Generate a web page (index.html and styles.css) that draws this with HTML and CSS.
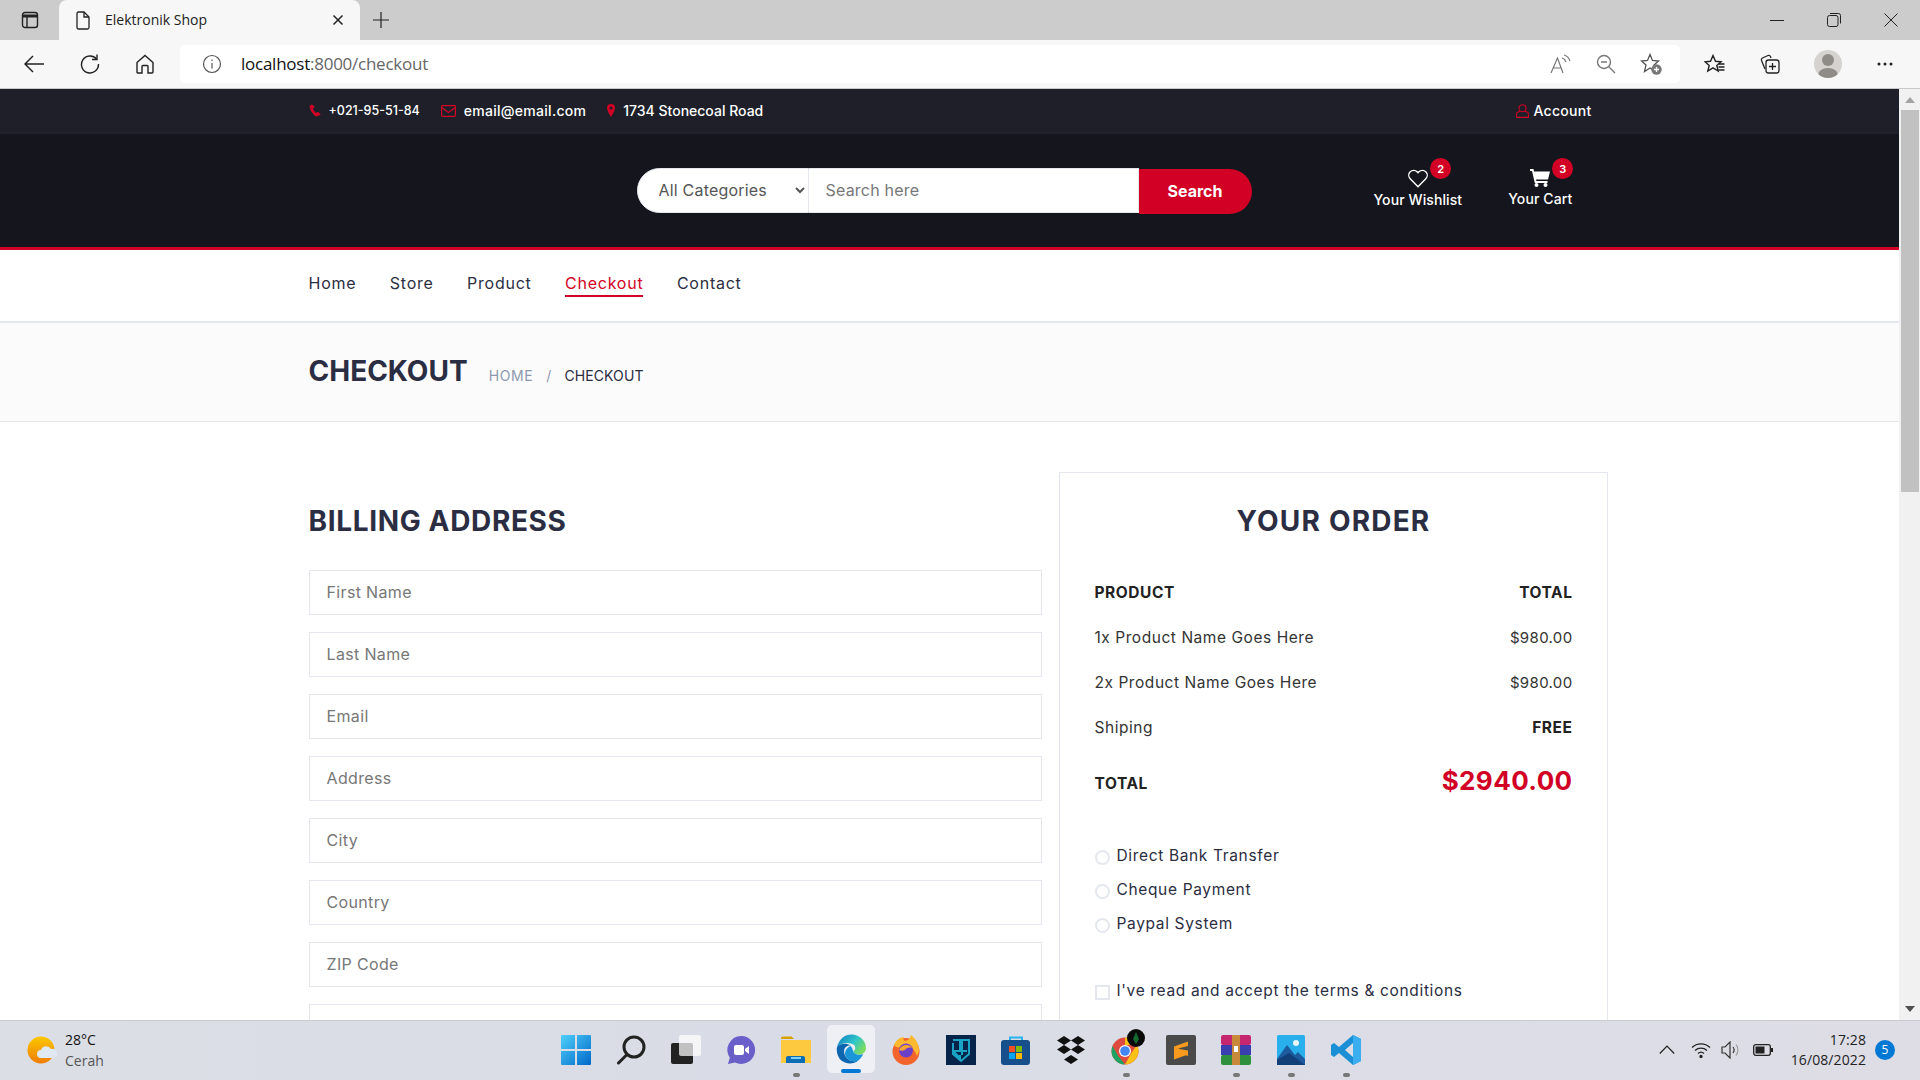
FILE: index.html
```html
<!DOCTYPE html>
<html lang="en">
  <head>
    <meta charset="UTF-8" />
    <title>Elektronik Shop</title>
    <link rel="stylesheet" href="styles.css">
  </head>
  <body>
    <!-- Browser tabs -->
    <div class="tabstrip">
      <svg class="tab-actions" width="18" height="18" viewBox="0 0 18 18" fill="none" stroke="#222" stroke-width="1.4"><rect x="1.5" y="1.5" width="15" height="15" rx="2.5"/><path d="M1.5 5h15" stroke-width="3"/><path d="M6 5v11"/></svg>
      <div class="tab">
        <svg width="14" height="19" viewBox="0 0 14 19" fill="none" stroke="#222" stroke-width="1.3"><path d="M2.5 1h5.5l5 5v10.5a1.5 1.5 0 0 1-1.500 1.500h-9a1.500 1.500 0 0 1-1.500-1.500v-14a1.500 1.500 0 0 1 1.500-1.500z"/><path d="M8 1v5h5"/></svg>
        <span class="tab-title">Elektronik Shop</span>
        <svg width="12" height="12" viewBox="0 0 12 12" stroke="#222" stroke-width="1.500"><path d="M1.500 1.500l9 9M10.500 1.500l-9 9"/></svg>
      </div>
      <svg class="new-tab" width="16" height="16" viewBox="0 0 16 16" stroke="#222" stroke-width="1.200"><path d="M8 0v16M0 8h16"/></svg>
      <div class="window-controls">
        <svg width="14" height="14" viewBox="0 0 14 14" stroke="#222"><path d="M0 7.500h14"/></svg>
        <svg width="14" height="14" viewBox="0 0 14 14" fill="none" stroke="#222"><rect x=".5" y="2.500" width="10.500" height="11" rx="2"/><path d="M3 .5h8.500a2 2 0 0 1 2 2v8"/></svg>
        <svg width="14" height="14" viewBox="0 0 14 14" stroke="#222"><path d="M.5.5l13 13M13.500.5l-13 13"/></svg>
      </div>
    </div>

    <!-- Browser toolbar -->
    <div class="toolbar">
      <svg class="tool-back" width="20" height="18" viewBox="0 0 20 18" fill="none" stroke="#222" stroke-width="1.500"><path d="M20 9H1M9 1L1 9l8 8"/></svg>
      <svg class="tool-reload" width="20" height="20" viewBox="0 0 20 20" fill="none" stroke="#222" stroke-width="1.400"><path d="M16.500 5A8.500 8.500 0 1 0 18.500 10"/><path d="M17 .5V5.500H12"/></svg>
      <svg class="tool-home" width="20" height="20" viewBox="0 0 20 20" fill="none" stroke="#222" stroke-width="1.400"><path d="M2 8.500L10 1.500l8 7V18a1 1 0 0 1-1 1h-4v-6.500a1 1 0 0 0-1-1H8a1 1 0 0 0-1 1V19H3a1 1 0 0 1-1-1z"/></svg>
      <div class="address-bar">
        <svg width="20" height="20" viewBox="0 0 20 20" fill="none" stroke="#555" stroke-width="1.200"><circle cx="10" cy="10" r="8.500"/><path d="M10 9v5.500M10 5.500v1.500"/></svg>
        <span class="url">localhost<span class="url-dim">:8000/checkout</span></span>
        <div class="address-actions">
          <svg width="22" height="20" viewBox="0 0 22 20" fill="none" stroke="#777" stroke-width="1.200"><path d="M1 19L7.500 4 13 19M3.500 14h8"/><path d="M12 4a6 6 0 0 1 4 4M14 1a9 9 0 0 1 6 6"/></svg>
          <svg width="20" height="20" viewBox="0 0 20 20" fill="none" stroke="#777" stroke-width="1.400"><circle cx="8" cy="8" r="6.500"/><path d="M5 8h6M13 13l6 6"/></svg>
          <svg width="22" height="22" viewBox="0 0 22 22"><path d="M10 1.500l2.500 6 6 .5-4.500 4 1.500 6.500-5.500-3.500-5.500 3.500 1.500-6.500-4.500-4 6-.5z" fill="none" stroke="#555" stroke-width="1.300"/><circle cx="16.500" cy="16.500" r="5.200" fill="#777"/><path d="M16.500 14v5M14 16.500h5" stroke="#fff" stroke-width="1.300"/></svg>
        </div>
      </div>
      <svg class="tool-favs" width="21" height="20" viewBox="0 0 21 20" fill="none" stroke="#222" stroke-width="1.400"><path d="M9 1.500l2.500 5.800 5.500.5-4.200 3.600 1.400 5.600-5.200-3.200-5.200 3.200 1.400-5.600L1 7.800l5.500-.5z"/><path d="M15 10h5.500M14.500 13h6M14.500 16h6"/></svg>
      <svg class="tool-collections" width="20" height="20" viewBox="0 0 20 20" fill="none" stroke="#222" stroke-width="1.300"><path d="M5 15L1.500 6.500a2 2 0 0 1 1-2.500L8 1.500a2 2 0 0 1 2.500 1L11 4"/><rect x="6" y="6" width="13" height="13" rx="2.500"/><path d="M12.500 9v7M9 12.500h7"/></svg>
      <div class="profile"><span class="profile-head"></span><span class="profile-body"></span></div>
      <svg class="tool-more" width="16" height="4" viewBox="0 0 16 4" fill="#222"><circle cx="2" cy="2" r="1.500"/><circle cx="8" cy="2" r="1.500"/><circle cx="14" cy="2" r="1.500"/></svg>
    </div>

    <div class="viewport">
      <div class="page">
        <!-- Top header -->
        <div class="top-header">
          <div class="container top-row">
            <ul class="top-links">
              <li class="top-phone">
                <svg class="icon-red" width="12" height="13" viewBox="0 0 12 13"><path d="M2.600.6L.7 1.900c-.5 2.800 3.800 9.800 6.800 10.500l3.800-1.300c.3-.2.400-.5.200-.8L9.300 8.100c-.2-.2-.5-.3-.8-.1L7.100 9C6 8.400 4.200 5.700 3.900 4.300l1.400-.9c.2-.2.300-.5.200-.7L3.500.8C3.300.500 2.900.4 2.600.6z"/></svg>
                +021-95-51-84
              </li>
              <li>
                <svg width="15" height="12" viewBox="0 0 15 12" fill="none" stroke="#d10024" stroke-width="1.200"><rect x=".6" y=".6" width="13.800" height="10.800" rx=".8"/><path d="M.8 2.500l6.700 5 6.700-5"/></svg>
                email@email.com
              </li>
              <li class="top-road">
                <svg class="icon-red" width="8" height="13" viewBox="0 0 8 13"><path fill-rule="evenodd" d="M4 0a4 4 0 0 1 4 4c0 2.500-2.500 6.500-4 9C2.500 10.500 0 6.500 0 4a4 4 0 0 1 4-4zm0 2.500a1.500 1.500 0 1 0 0 3 1.500 1.500 0 0 0 0-3z"/></svg>
                1734 Stonecoal Road
              </li>
            </ul>
            <div class="account">
              <svg width="13" height="14" viewBox="0 0 13 14" fill="none" stroke="#d10024" stroke-width="1.100"><circle cx="6.500" cy="4.200" r="3.500"/><path d="M4 7.200L1.500 8.300A1.500 1.500 0 0 0 .6 9.700v3.700h11.800V9.700a1.500 1.500 0 0 0-.9-1.400L9 7.200"/></svg>
              Account
            </div>
          </div>
        </div>

        <!-- Main header -->
        <header class="main-header">
          <div class="container main-row">
            <form class="search-form">
              <select class="search-select"><option>All Categories</option></select>
              <input class="search-input" type="text" placeholder="Search here" />
              <button class="search-btn" type="button">Search</button>
            </form>
            <div class="header-ctn">
              <div class="ctn-item ctn-wishlist">
                <span class="qty">2</span>
                <svg width="20" height="19" viewBox="0 0 20 19" fill="none" stroke="#fff" stroke-width="1.400"><path d="M10 17.800L2.200 9.800a5 5 0 0 1 0-7 4.800 4.800 0 0 1 6.900 0l.9 1 .9-1a4.800 4.800 0 0 1 6.900 0 5 5 0 0 1 0 7z"/></svg>
                <span>Your Wishlist</span>
              </div>
              <div class="ctn-item ctn-cart">
                <span class="qty">3</span>
                <svg width="20" height="18" viewBox="0 0 20 18" fill="#fff"><path d="M0 0h3.500l.6 2.500H20l-2 8H6l.4 1.500H17.500v2H4.800L2 2H0z"/><circle cx="6.500" cy="16" r="2"/><circle cx="15.500" cy="16" r="2"/></svg>
                <span>Your Cart</span>
              </div>
            </div>
          </div>
        </header>

        <!-- Navigation -->
        <nav class="main-nav">
          <ul class="container nav-list">
            <li><a>Home</a></li>
            <li><a>Store</a></li>
            <li><a>Product</a></li>
            <li><a class="active">Checkout</a></li>
            <li><a>Contact</a></li>
          </ul>
        </nav>

        <!-- Breadcrumb -->
        <div class="breadcrumb">
          <div class="container breadcrumb-row">
            <h3 class="breadcrumb-title">CHECKOUT</h3>
            <ul class="breadcrumb-tree">
              <li class="crumb-link">HOME</li>
              <li class="crumb-sep">/</li>
              <li>CHECKOUT</li>
            </ul>
          </div>
        </div>

        <!-- Checkout -->
        <div class="container checkout">
          <div class="billing">
            <h3 class="section-title">BILLING ADDRESS</h3>
            <input class="input" type="text" placeholder="First Name" />
            <input class="input" type="text" placeholder="Last Name" />
            <input class="input" type="text" placeholder="Email" />
            <input class="input" type="text" placeholder="Address" />
            <input class="input" type="text" placeholder="City" />
            <input class="input" type="text" placeholder="Country" />
            <input class="input" type="text" placeholder="ZIP Code" />
            <input class="input" type="text" placeholder="Telephone" />
          </div>
          <div class="order-details">
            <h3 class="order-title">YOUR ORDER</h3>
            <div class="order-row strong"><span>PRODUCT</span><span>TOTAL</span></div>
            <div class="order-row"><span>1x Product Name Goes Here</span><span class="order-price">$980.00</span></div>
            <div class="order-row"><span>2x Product Name Goes Here</span><span class="order-price">$980.00</span></div>
            <div class="order-row"><span>Shiping</span><strong>FREE</strong></div>
            <div class="order-total"><strong>TOTAL</strong><span class="order-sum">$2940.00</span></div>
            <div class="payment">
              <label class="choice"><input type="radio" name="pay" />Direct Bank Transfer</label>
              <label class="choice"><input type="radio" name="pay" />Cheque Payment</label>
              <label class="choice"><input type="radio" name="pay" />Paypal System</label>
            </div>
            <label class="choice terms"><input type="checkbox" />I've read and accept the terms &amp; conditions</label>
          </div>
        </div>
      </div>

      <div class="scrollbar">
        <span class="arrow-up"></span>
        <div class="scroll-track"><div class="scroll-thumb"></div></div>
        <span class="arrow-down"></span>
      </div>
    </div>

    <!-- Windows taskbar -->
    <footer class="taskbar">
      <div class="weather">
        <svg width="30" height="30" viewBox="0 0 30 30">
          <defs><linearGradient id="sun" x1="0" y1="0" x2="0" y2="1"><stop offset="0" stop-color="#fbc800"/><stop offset="1" stop-color="#f07c00"/></linearGradient></defs>
          <circle cx="14" cy="15" r="13.500" fill="url(#sun)"/>
          <path d="M14 23a4 4 0 0 1 0-8 5.500 5.500 0 0 1 10-1 4.500 4.500 0 0 1 3 9z" fill="#dfe8f3"/>
        </svg>
        <div class="weather-text"><span>28°C</span><span class="weather-sub">Cerah</span></div>
      </div>

      <div class="task-icons">
        <div class="task-icon">
          <svg width="30" height="30" viewBox="0 0 30 30"><defs><linearGradient id="win" x1="0" y1="0" x2="1" y2="1"><stop offset="0" stop-color="#4fd0fb"/><stop offset="1" stop-color="#0067c9"/></linearGradient></defs><path d="M0 1a1 1 0 0 1 1-1h13v14H0zM16 0h13a1 1 0 0 1 1 1v13H16zM0 16h14v14H1a1 1 0 0 1-1-1zM16 16h14v13a1 1 0 0 1-1 1H16z" fill="url(#win)"/></svg>
        </div>
        <div class="task-icon">
          <svg width="30" height="30" viewBox="0 0 30 30" fill="none" stroke="#222" stroke-width="3"><circle cx="18" cy="12" r="10"/><path d="M11 19.500L2.500 28" stroke-linecap="round"/></svg>
        </div>
        <div class="task-icon">
          <svg width="30" height="30" viewBox="0 0 30 30"><rect x="0" y="8" width="22" height="21" rx="2" fill="#222"/><rect x="8" y="0" width="22" height="21" rx="2" fill="#fff" fill-opacity=".72"/></svg>
        </div>
        <div class="task-icon">
          <svg width="30" height="30" viewBox="0 0 30 30"><path d="M15 1a14 14 0 1 1-6 26.600L2 29l1.800-6.200A14 14 0 0 1 15 1z" fill="#6a5fc9"/><rect x="8" y="10" width="10" height="10" rx="2" fill="#fff"/><path d="M19 14l4-3v8l-4-3z" fill="#fff"/></svg>
        </div>
        <div class="task-icon open">
          <svg width="30" height="28" viewBox="0 0 30 28"><path d="M0 2a1.500 1.500 0 0 1 1.500-1.500h9L13 3h-13z" fill="#d9a100"/><path d="M0 4h30v22a1 1 0 0 1-1 1H1a1 1 0 0 1-1-1z" fill="#fcc93f"/><path d="M5 27v-5a2 2 0 0 1 2-2h15a2 2 0 0 1 2 2v5z" fill="#0a6db5"/><rect x="10" y="21" width="10" height="2" fill="#7fd0f5"/></svg>
        </div>
        <div class="task-icon current">
          <svg width="30" height="30" viewBox="0 0 30 30"><defs><linearGradient id="edge" x1="0" y1="0" x2="1" y2=".6"><stop offset="0" stop-color="#0c7bc2"/><stop offset=".6" stop-color="#30c6c9"/><stop offset="1" stop-color="#7cdc5f"/></linearGradient></defs><path d="M1 13C3 5 9 .5 15.500.5 24 .5 30 7 30 14c0 4-3 6.500-7 6.500-3 0-5.500-1-6-3 2.500-1 3-4.500 1-6.500-4-3-12-3-17 2z" fill="url(#edge)"/><path d="M1 13c3.500-4 10-4 13.500-1.500C10 11 7 15 8.500 20c1.500 5 7 9 14 6.500C18 30 11 30.500 6 27 2 24 0 18 1 13z" fill="#0f66b0"/><path d="M17 17.500c1 3 6 4 10 2.500-1 3-3 5.500-5.500 7-5 1.500-10-1-12-5-1.500-4 1-8.500 5-10 1.500 1 2.500 3.500 2.500 5.500z" fill="#1a96d8"/></svg>
        </div>
        <div class="task-icon">
          <svg width="30" height="30" viewBox="0 0 30 30"><circle cx="15" cy="16.500" r="13.500" fill="#f2642c"/><path d="M3 10c2-5 6-8 10-8-1 2-1 3 1 4 5-1 5-4 6-6 3 2 8 8 8 14 0 3-1 5-2 7-2-7-8-11-14-10-4 1-5 3-9-1z" fill="#ffb92e"/><circle cx="15" cy="15.500" r="7" fill="#6b3fc8"/><path d="M8 15c1-3 4-5 7-5 3 0 5 1 6 3-3-1-6 0-7 2-2 1-4 1-6 0z" fill="#f7a534"/></svg>
        </div>
        <div class="task-icon">
          <svg width="30" height="30" viewBox="0 0 30 30"><rect width="30" height="30" fill="#06244a"/><path d="M7 5h7v11H9v2l5 5v-3M16 20V5h7v14l-8 7-8-7v-11M16 16h5" fill="none" stroke="#1aa3c4" stroke-width="2"/></svg>
        </div>
        <div class="task-icon">
          <svg width="30" height="30" viewBox="0 0 30 30"><path d="M9 6V2.500h12V6" fill="none" stroke="#2bb4ec" stroke-width="2"/><rect y="5" width="29" height="25" rx="3" fill="#164f8c"/><rect x="8" y="11" width="6" height="6" fill="#f25022"/><rect x="15" y="11" width="6" height="6" fill="#7fba00"/><rect x="8" y="18" width="6" height="6" fill="#00a4ef"/><rect x="15" y="18" width="6" height="6" fill="#ffb900"/></svg>
        </div>
        <div class="task-icon">
          <svg width="30" height="28" viewBox="0 0 30 28" fill="#111"><path d="M8 0l7 4.500L8 9 1 4.500zM22 0l7 4.500L22 9l-7-4.500zM8 9l7 4.500L8 18l-7-4.500zM22 9l7 4.500L22 18l-7-4.500zM15 19l7 4.500-7 4.500-7-4.500z"/></svg>
        </div>
        <div class="task-icon open">
          <svg class="icon-chrome" width="34" height="36" viewBox="0 0 34 36"><circle cx="14" cy="22" r="13.500" fill="#dd4b3e"/><path d="M14 8.500a13.500 13.500 0 0 1 12 7.500H14z" fill="#fbc116"/><path d="M26 16a13.500 13.500 0 0 1-12 19.500l6-11z" fill="#fbc116"/><path d="M1.500 17l6 10.500 6.500 8A13.500 13.500 0 0 1 1.500 17z" fill="#1ea362"/><circle cx="14" cy="22" r="6" fill="#fff"/><circle cx="14" cy="22" r="4.800" fill="#4285f4"/><circle cx="25" cy="9" r="9" fill="#0a0a0a"/><path d="M25 3l3 7-3 5-3-5z" fill="#126b2e"/></svg>
        </div>
        <div class="task-icon">
          <svg width="30" height="30" viewBox="0 0 30 30"><rect width="30" height="30" rx="2" fill="#4a4a4a"/><path d="M22 6.500L8 11.500v5l14 4.500v-5L12 13.500l10-2.500zM8 24.500l14-5v-4L8 13z" fill="#f79a1e"/></svg>
        </div>
        <div class="task-icon open">
          <svg width="30" height="30" viewBox="0 0 30 30"><rect width="30" height="10" y="0" rx="2" fill="#c6266e"/><rect width="30" height="10" y="10" fill="#3a3fb0"/><rect width="30" height="10" y="20" rx="2" fill="#2e8f3c"/><rect x="11" width="8" height="30" fill="#c88a3a"/><rect x="13" y="11" width="4" height="6" fill="#fff"/></svg>
        </div>
        <div class="task-icon open">
          <svg width="28" height="30" viewBox="0 0 28 30"><rect width="28" height="30" rx="1.500" fill="#29b0ec"/><circle cx="19" cy="8" r="3" fill="#e8f6fd"/><path d="M0 24L10 10l8 10 3-3 7 7v6H0z" fill="#1b5b9e"/><path d="M0 30v-5l12-7 16 12z" fill="#123f78"/></svg>
        </div>
        <div class="task-icon open">
          <svg width="30" height="30" viewBox="0 0 30 30"><path d="M22 0l8 4v22l-8 4-14-12-5 4-3-2V10l3-2 5 4zM22 8l-8 7 8 7z" fill="#1b8fd6"/><path d="M22 0l8 4v22l-8 4z" fill="#3aaeef"/></svg>
        </div>
      </div>

      <div class="tray">
        <svg width="16" height="9" viewBox="0 0 16 9" fill="none" stroke="#222" stroke-width="1.200"><path d="M.8 8.500L8 1l7.200 7.500"/></svg>
        <svg class="tray-wifi" width="20" height="16" viewBox="0 0 20 16" fill="none" stroke="#222" stroke-width="1.300"><path d="M1 5.500a13 13 0 0 1 18 0M4 8.500a9 9 0 0 1 12 0M7 11.500a4.500 4.500 0 0 1 6 0"/><circle cx="10" cy="14.500" r="1" fill="#222"/></svg>
        <svg class="tray-volume" width="22" height="18" viewBox="0 0 22 18" fill="none" stroke="#333" stroke-width="1.200"><path d="M1 6h3l5-5v16l-5-5H1z"/><path d="M12 6a5 5 0 0 1 0 6"/><path d="M15 3.500a9 9 0 0 1 0 11" stroke="#999"/></svg>
        <svg class="tray-battery" width="20" height="12" viewBox="0 0 20 12"><rect x=".7" y=".7" width="16.600" height="10.600" rx="2" fill="none" stroke="#222" stroke-width="1.300"/><rect x="2.500" y="2.500" width="9" height="7" fill="#222"/><rect x="18" y="4" width="2" height="4" fill="#222"/></svg>
        <div class="clock"><span>17:28</span><span>16/08/2022</span></div>
        <span class="notif">5</span>
      </div>
    </footer>
  </body>
</html>
```

FILE: styles.css
```css
* {
  box-sizing: border-box;
}

html,
body {
  margin: 0;
  height: 100%;
  overflow: hidden;
}

body {
  display: flex;
  flex-direction: column;
  height: 1080px;
  font-family: Inter, "Open Sans", sans-serif;
  font-size: 14px;
  color: #333;
  background: #fff;
}

ul {
  margin: 0;
  padding: 0;
  list-style: none;
}

h3 {
  margin: 0;
}

/* browser chrome */
.tabstrip {
  height: 40px;
  flex: none;
  display: flex;
  align-items: center;
  background: #cccccc;
}

.tab-actions {
  margin-left: 21px;
}

.tab {
  width: 301px;
  height: 40px;
  margin-left: 20px;
  padding: 0 16px 0 17px;
  display: flex;
  align-items: center;
  background: #f7f7f7;
  border-radius: 8px 8px 0 0;
}

.tab-title {
  flex: 1;
  margin-left: 15px;
  padding-bottom: 2px;
  font-family: "Open Sans", sans-serif;
  font-size: 14px;
  color: #222;
}

.new-tab {
  margin-left: 13px;
}

.window-controls {
  margin-left: auto;
  margin-right: 22px;
  display: flex;
  gap: 43px;
}

.toolbar {
  height: 49px;
  flex: none;
  display: flex;
  align-items: center;
  background: #f7f7f7;
  border-bottom: 1px solid #c9c9c9;
}

.tool-back {
  margin-left: 24px;
}

.tool-reload {
  margin-left: 36px;
}

.tool-home {
  margin-left: 35px;
}

.address-bar {
  width: 1500px;
  height: 38px;
  margin-left: 25px;
  padding: 0 18px 0 22px;
  display: flex;
  align-items: center;
  background: #fff;
  border-radius: 6px;
}

.url {
  margin-left: 19px;
  padding-bottom: 2px;
  font-family: "Open Sans", sans-serif;
  font-size: 17px;
  letter-spacing: -0.25px;
  color: #111;
}

.url-dim {
  color: #666;
}

.address-actions {
  margin-left: auto;
  display: flex;
  align-items: center;
  gap: 24px;
}

.tool-favs {
  margin-left: 24px;
}

.tool-collections {
  margin-left: 35px;
}

.profile {
  width: 28px;
  height: 28px;
  margin-left: 34px;
  position: relative;
  overflow: hidden;
  border-radius: 50%;
  background: #d5d3d0;
}

.profile-head {
  position: absolute;
  left: 8px;
  top: 4px;
  width: 12px;
  height: 12px;
  border-radius: 50%;
  background: #8f8b87;
}

.profile-body {
  position: absolute;
  left: 4px;
  top: 18px;
  width: 20px;
  height: 14px;
  border-radius: 50%;
  background: #8f8b87;
}

.tool-more {
  margin-left: 35px;
}

/* page */
.viewport {
  flex: 1;
  min-height: 0;
  display: flex;
}

.page {
  flex: 1;
  min-width: 0;
  overflow: hidden;
}

.container {
  width: 1320px;
  margin: 0 auto;
  padding: 0 16px 0 19px;
}

.scrollbar {
  width: 21px;
  flex: none;
  display: flex;
  flex-direction: column;
  align-items: center;
  background: #f1f1f1;
}

.arrow-up,
.arrow-down {
  width: 0;
  height: 0;
  border-left: 5px solid transparent;
  border-right: 5px solid transparent;
}

.arrow-up {
  margin: 8px 0 7px;
  border-bottom: 6px solid #a3a3a3;
}

.arrow-down {
  margin: 7px 0 8px;
  border-top: 6px solid #505050;
}

.scroll-track {
  flex: 1;
  width: 100%;
  padding: 0 1px 0 2px;
}

.scroll-thumb {
  height: 382px;
  background: #c1c1c1;
}

/* top header */
.top-header {
  height: 45px;
  padding-bottom: 2px;
  background: #1e1f29;
  color: #fff;
  font-weight: 500;
  font-size: 14px;
  letter-spacing: 0.28px;
}

.top-row {
  height: 100%;
  display: flex;
  align-items: center;
  justify-content: space-between;
}

.top-links {
  display: flex;
  gap: 21px;
}

.top-links li,
.account {
  display: flex;
  align-items: center;
  gap: 8px;
}

.top-links .top-phone {
  font-size: 12.500px;
  letter-spacing: 0;
}

.top-links .top-road {
  letter-spacing: 0;
}

.account {
  gap: 4px;
  margin-right: 2px;
}

.icon-red {
  fill: #d10024;
}

/* main header */
.main-header {
  height: 116px;
  background: #15161d;
  border-bottom: 3px solid #d10024;
}

.main-row {
  height: 100%;
  display: flex;
  align-items: center;
  padding-left: 347px;
}

.search-form {
  display: flex;
  align-items: center;
}

.search-select {
  width: 172px;
  height: 45px;
  padding: 0 12px 2px 17px;
  background: #fff;
  border: 1px solid #e4e7ed;
  border-radius: 40px 0 0 40px;
  font: 400 16px Inter, sans-serif;
  letter-spacing: 0.2px;
  color: #555;
}

.search-input {
  width: 330px;
  height: 45px;
  padding: 0 17px 2px;
  background: #fff;
  border: 1px solid #e4e7ed;
  border-left: 0;
  font: 400 16px Inter, sans-serif;
  letter-spacing: 0.2px;
}

.search-btn {
  width: 113px;
  height: 45px;
  margin-top: 1px;
  padding-bottom: 2px;
  background: #d10024;
  color: #fff;
  border: none;
  border-radius: 0 40px 40px 0;
  font: 700 16px Inter, sans-serif;
}

.header-ctn {
  margin-left: 122px;
  margin-top: -4px;
  display: flex;
  align-items: flex-start;
  gap: 46px;
  color: #fff;
  font-weight: 500;
  font-size: 14px;
  letter-spacing: 0.1px;
}

.ctn-item {
  position: relative;
  display: flex;
  flex-direction: column;
  align-items: center;
  gap: 3px;
}

.qty {
  position: absolute;
  top: -11px;
  right: -2px;
  width: 21px;
  height: 21px;
  display: flex;
  align-items: center;
  justify-content: center;
  border-radius: 50%;
  background: #d10024;
  font-size: 11px;
  font-weight: 600;
}

.ctn-wishlist .qty {
  right: 11px;
}

.ctn-cart .qty {
  right: -1px;
}

/* navigation */
.main-nav {
  height: 73px;
  border-bottom: 2px solid #e4e7ed;
}

.nav-list {
  display: flex;
  gap: 33.500px;
  padding-top: 23px;
  font-size: 16px;
  letter-spacing: 0.75px;
  color: #2b2d42;
}

.nav-list a {
  display: block;
  padding-bottom: 2px;
  border-bottom: 2px solid transparent;
}

.nav-list a.active {
  color: #d10024;
  border-bottom-color: #d10024;
}

/* breadcrumb */
.breadcrumb {
  height: 99px;
  padding-bottom: 3px;
  background: #fbfbfc;
  border-bottom: 1px solid #e4e7ed;
}

.breadcrumb-row {
  height: 100%;
  display: flex;
  align-items: center;
  gap: 21px;
}

.breadcrumb-title {
  font-size: 28px;
  font-weight: 700;
  color: #2b2d42;
}

.breadcrumb-tree {
  margin-top: 9px;
  display: flex;
  gap: 13px;
  font-size: 14px;
  letter-spacing: 0.1px;
  color: #2b2d42;
}

.crumb-link {
  letter-spacing: 0.6px;
  color: #8d99ae;
}

.crumb-sep {
  color: #8d99ae;
}

/* checkout */
.checkout {
  display: grid;
  grid-template-columns: 733px 549px;
  column-gap: 17px;
  padding-top: 50px;
}

.billing {
  padding-top: 31px;
}

.section-title {
  height: 67px;
  font-size: 28px;
  font-weight: 700;
  line-height: 36px;
  letter-spacing: 0.65px;
  color: #2b2d42;
}

.input {
  display: block;
  width: 100%;
  height: 45px;
  margin-bottom: 17px;
  padding: 0 17px 2px;
  background: #fff;
  border: 1px solid #e4e7ed;
  font: 400 16px Inter, sans-serif;
  letter-spacing: 0.35px;
}

input::placeholder {
  color: #777;
}

.order-details {
  padding: 30px 34px 30px 35px;
  border: 1px solid #e4e7ed;
  border-bottom: 0;
  font-size: 15.500px;
  letter-spacing: 0.55px;
}

.order-title {
  height: 67px;
  text-align: center;
  font-size: 28px;
  font-weight: 700;
  line-height: 36px;
  letter-spacing: 1.200px;
  color: #2b2d42;
}

.order-row {
  height: 45px;
  display: flex;
  align-items: center;
  justify-content: space-between;
}

.order-row.strong,
.order-row strong,
.order-total strong {
  font-weight: 700;
  color: #222;
}

.order-price {
  font-size: 15px;
  letter-spacing: 0.35px;
}

.order-total {
  height: 58px;
  padding-bottom: 4px;
  margin-top: 3px;
  display: flex;
  align-items: center;
  justify-content: space-between;
}

.order-total strong {
  margin-top: 6px;
}

.order-sum {
  font-size: 26px;
  font-weight: 700;
  letter-spacing: 0.4px;
  color: #d10024;
}

.payment {
  margin-top: 27px;
}

.choice {
  height: 34px;
  display: flex;
  align-items: center;
  gap: 7px;
  letter-spacing: 0.65px;
  color: #2b2d42;
}

.choice input {
  appearance: none;
  width: 15px;
  height: 15px;
  margin: 4px 0 0;
  border: 2px solid #e4e7ed;
  background: #fff;
}

.choice input[type="radio"] {
  border-radius: 50%;
}

.terms {
  margin-top: 33px;
}

/* taskbar */
.taskbar {
  height: 60px;
  flex: none;
  display: grid;
  grid-template-columns: 1fr auto 1fr;
  align-items: center;
  padding-bottom: 2px;
  background: linear-gradient(90deg, #dcdee5, #d9dce6 40%, #dedde6);
  border-top: 1px solid #c8cad0;
}

.weather {
  margin-left: 27px;
  display: flex;
  align-items: center;
  gap: 8px;
}

.weather-text {
  display: flex;
  flex-direction: column;
  gap: 4px;
  font-family: "Open Sans", sans-serif;
  font-size: 14px;
  line-height: 17px;
  color: #111;
}

.weather-sub {
  color: #555;
}

.task-icons {
  padding-left: 2px;
  display: flex;
}

.task-icon {
  position: relative;
  width: 55px;
  height: 50px;
  display: flex;
  align-items: center;
  justify-content: center;
}

.icon-chrome {
  margin-left: 3px;
  margin-top: -6px;
}

.task-icon.open::after,
.task-icon.current::after {
  content: "";
  position: absolute;
  left: 24px;
  bottom: -2px;
  width: 7px;
  height: 4px;
  border-radius: 2px;
  background: #777;
}

.task-icon.current {
  width: 48px;
  height: 48px;
  margin: 0 3.500px;
  background: #eff0f5;
  border-radius: 5px;
}

.task-icon.current::after {
  left: 14px;
  bottom: 0;
  width: 20px;
  background: #0078d4;
}

.tray {
  display: flex;
  align-items: center;
  justify-content: flex-end;
  padding-right: 25px;
}

.tray-wifi {
  margin-left: 16px;
}

.tray-volume {
  margin-left: 10px;
}

.tray-battery {
  margin-left: 10px;
}

.clock {
  margin-left: 18px;
  display: flex;
  flex-direction: column;
  align-items: flex-end;
  gap: 2px;
  font-family: "Open Sans", sans-serif;
  font-size: 14px;
  letter-spacing: 0.1px;
  line-height: 18px;
  color: #222;
}

.notif {
  width: 20px;
  height: 20px;
  margin-left: 9px;
  display: flex;
  align-items: center;
  justify-content: center;
  border-radius: 50%;
  background: #0078d4;
  color: #fff;
  font-family: "Open Sans", sans-serif;
  font-size: 12px;
}
```
